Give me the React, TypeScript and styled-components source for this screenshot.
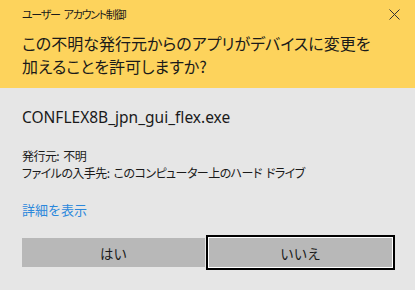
import React from 'react';
import styled, { createGlobalStyle } from 'styled-components';

const GlobalStyle = createGlobalStyle`
	html, body {
		margin: 0;
		padding: 0;
		background: #e6e6e6;
	}
	body {
		font-family: 'Noto Sans CJK JP', 'Noto Sans', sans-serif;
		color: #000;
	}
`;

const Dialog = styled.div`
	width: 415px;
	height: 290px;
	display: flex;
	flex-direction: column;
	background: #e6e6e6;
	overflow: hidden;
`;

const Header = styled.header`
	background: #fdd35c;
	height: 88px;
	box-sizing: border-box;
	padding: 6px 14px 0 22px;
`;

const TitleBar = styled.div`
	display: flex;
	align-items: center;
	justify-content: space-between;
	height: 16px;
`;

const Title = styled.span`
	font-size: 11px;
	line-height: 16px;
	letter-spacing: -1.3px;
	word-spacing: 3px;
	font-feature-settings: 'palt';
	color: #1a1a1a;
`;

const CloseButton = styled.button`
	width: 14px;
	height: 14px;
	padding: 0;
	border: none;
	background: none;
	display: flex;
	align-items: center;
	justify-content: center;
	color: #333;
`;

const Question = styled.h1`
	margin: 10px 0 0;
	font-size: 16px;
	font-weight: 400;
	line-height: 23px;
	white-space: nowrap;
	font-feature-settings: 'palt';
	color: #1a1a1a;
`;

const Body = styled.main`
	flex: 1;
	display: flex;
	flex-direction: column;
	padding: 0 23px 0 22px;
`;

const FileName = styled.div`
	margin-top: 19px;
	font-family: 'Noto Sans', sans-serif;
	font-size: 15.5px;
	line-height: 20px;
	color: #1a1a1a;
`;

const Details = styled.div`
	margin-top: 20px;
	font-size: 12px;
	line-height: 17px;
	letter-spacing: -0.55px;
	word-spacing: 2px;
	white-space: nowrap;
	font-feature-settings: 'palt';
	color: #1a1a1a;
`;

const MoreLink = styled.a`
	margin-top: 20px;
	align-self: flex-start;
	font-size: 13px;
	line-height: 18px;
	color: #2b88dc;
	text-decoration: none;
	cursor: pointer;
`;

const Buttons = styled.div`
	margin-top: 19px;
	display: grid;
	grid-template-columns: 1fr 1fr;
	gap: 4px;
`;

const Button = styled.button<{ $focused?: boolean }>`
	height: 29px;
	padding: 0;
	border: none;
	background: #b8b8b8;
	font-family: 'Noto Sans CJK JP', sans-serif;
	font-size: 13.5px;
	color: #1a1a1a;
	box-shadow: ${p => (p.$focused ? '0 0 0 1px #fff, 0 0 0 3px #000' : 'none')};
	outline: none;
`;

const CloseIcon = () => (
	<svg width='11' height='11' viewBox='0 0 11 11'>
		<path d='M0.5 0.5 L10.5 10.5 M10.5 0.5 L0.5 10.5' stroke='currentColor' strokeWidth='1' fill='none' />
	</svg>
);

export default function App() {
	return (
		<Dialog>
			<GlobalStyle />
			<Header>
				<TitleBar>
					<Title>ユーザー アカウント制御</Title>
					<CloseButton aria-label='閉じる'>
						<CloseIcon />
					</CloseButton>
				</TitleBar>
				<Question>
					この不明な発行元からのアプリがデバイスに変更を
					<br />
					加えることを許可しますか?
				</Question>
			</Header>
			<Body>
				<FileName>CONFLEX8B_jpn_gui_flex.exe</FileName>
				<Details>
					発行元: 不明
					<br />
					ファイルの入手先: このコンピューター上のハード ドライブ
				</Details>
				<MoreLink>詳細を表示</MoreLink>
				<Buttons>
					<Button>はい</Button>
					<Button $focused>いいえ</Button>
				</Buttons>
			</Body>
		</Dialog>
	);
}
